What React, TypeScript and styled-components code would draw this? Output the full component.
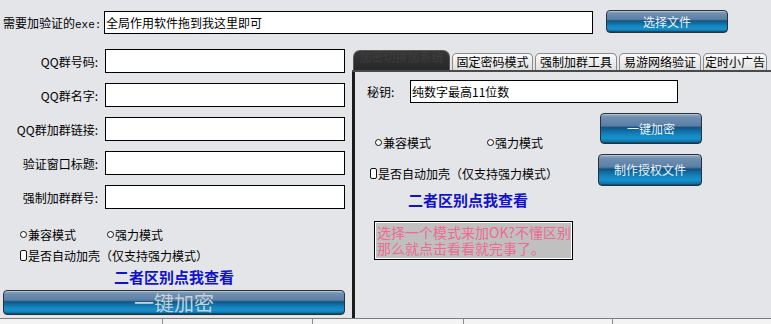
import React from "react";
import styled, { createGlobalStyle } from "styled-components";

const GlobalStyle = createGlobalStyle`
  html, body { margin: 0; padding: 0; background: #e4e5e8; }
  body { font-family: "Noto Sans CJK SC", "Noto Sans", sans-serif; font-size: 12px; color: #000; }
  * { box-sizing: border-box; }
`;

const Window = styled.div`
  width: 771px;
  height: 324px;
  overflow: hidden;
  background: #e4e5e8;
  display: flex;
  flex-direction: column;
`;

const TopBar = styled.div`
  height: 45px;
  flex: none;
  display: flex;
  align-items: flex-start;
  padding: 10px 0 0 3px;
`;

const TopLabel = styled.div`
  width: 101px;
  height: 25px;
  line-height: 25px;
  white-space: nowrap;
`;

const Mono = styled.span`
  font-family: "Liberation Mono", "DejaVu Sans Mono", monospace;
  font-size: 11px;
`;

const TextBox = styled.input<{ $w: number; $h: number }>`
  width: ${(p) => p.$w}px;
  height: ${(p) => p.$h}px;
  border: 1px solid #000;
  background: #fff;
  padding: 0 1px;
  margin: 0;
  font-family: "Noto Sans CJK SC", "Noto Sans", sans-serif;
  font-size: 12px;
  color: #000;
  outline: none;
  border-radius: 0;
`;

const TopInput = styled(TextBox)`
  margin-top: 1px;
`;

const BlueButton = styled.button<{ $w: number; $h: number; $fs?: number; $fg?: string }>`
  width: ${(p) => p.$w}px;
  height: ${(p) => p.$h}px;
  padding: 0;
  margin: 0;
  border: 1px solid #2b3137;
  border-radius: 4px;
  font-family: "Noto Sans CJK SC", "Noto Sans", sans-serif;
  font-size: ${(p) => p.$fs ?? 12}px;
  color: ${(p) => p.$fg ?? "#e8f3fb"};
  line-height: 1;
  background: linear-gradient(
    to bottom,
    #93adc7 0%,
    #6f8fb1 12%,
    #5b7fa5 40%,
    #14527f 47%,
    #0f6599 54%,
    #1586c0 72%,
    #1690cb 84%,
    #0b679c 100%
  );
  box-shadow: inset 0 1px 0 rgba(255, 255, 255, 0.3), inset 0 -1px 0 rgba(0, 0, 0, 0.25);
  cursor: pointer;
`;

const TopButton = styled(BlueButton)`
  margin-left: 13px;
`;

const Main = styled.div`
  flex: 1;
  display: flex;
  min-height: 0;
`;

const LeftPanel = styled.div`
  width: 352px;
  flex: none;
  display: flex;
  flex-direction: column;
`;

const FieldGrid = styled.div`
  display: grid;
  grid-template-columns: 98px 240px;
  column-gap: 7px;
  row-gap: 10px;
  grid-auto-rows: 24px;
  padding-top: 4px;
  align-items: center;
`;

const FieldLabel = styled.div`
  text-align: right;
  white-space: nowrap;
`;

const OptionRow = styled.div<{ $mt: number; $pl: number; $cols?: string }>`
  margin-top: ${(p) => p.$mt}px;
  padding-left: ${(p) => p.$pl}px;
  height: 20px;
  display: grid;
  grid-template-columns: ${(p) => p.$cols ?? "auto"};
  justify-content: start;
  align-items: center;
  white-space: nowrap;
`;

const Option = styled.span`
  display: inline-flex;
  align-items: center;
`;

const RadioMark = styled.span`
  width: 7px;
  height: 7px;
  border: 1px solid #111;
  border-radius: 50%;
  margin-right: 1px;
  background: #fff;
`;

const CheckMark = styled.span`
  width: 7px;
  height: 11px;
  border: 1px solid #111;
  border-radius: 2px;
  margin-right: 1px;
  background: #fff;
`;

const HelpLink = styled.a<{ $mt: number; $ml: number }>`
  display: block;
  margin-top: ${(p) => p.$mt}px;
  margin-left: ${(p) => p.$ml}px;
  height: 20px;
  line-height: 20px;
  font-size: 15px;
  font-weight: bold;
  color: #1212c9;
  text-decoration: none;
  white-space: nowrap;
  cursor: pointer;
`;

const BigButton = styled(BlueButton)`
  margin: 3px 0 0 3px;
`;

const TabControl = styled.div`
  flex: 1;
  min-width: 0;
  display: flex;
  flex-direction: column;
`;

const TabBar = styled.div`
  height: 27px;
  padding: 5px 0 0 1px;
  display: flex;
  align-items: flex-start;
  gap: 2px;
  overflow: hidden;
`;

const Tab = styled.div<{ $w: number; $active?: boolean }>`
  flex: none;
  width: ${(p) => p.$w}px;
  height: ${(p) => (p.$active ? 22 : 18)}px;
  margin-top: ${(p) => (p.$active ? 0 : 3)}px;
  border: 1px solid ${(p) => (p.$active ? "#5a5a5a" : "#8a8a8a")};
  border-bottom: none;
  border-radius: ${(p) => (p.$active ? "7px 7px 0 0" : "5px 5px 0 0")};
  background: ${(p) =>
    p.$active
      ? "linear-gradient(to bottom, #363636, #262626)"
      : "linear-gradient(to bottom, #fbfbfb, #e9e9e9 60%, #dcdcdc)"};
  color: ${(p) => (p.$active ? "#3e3e3e" : "#000")};
  font-size: 12px;
  line-height: ${(p) => (p.$active ? 12 : 16)}px;
  text-align: center;
  white-space: nowrap;
  overflow: hidden;
`;

const TabStrip = styled.div`
  height: 2px;
  flex: none;
  margin-top: -2px;
  background: #4a4a4a;
`;

const TabBody = styled.div`
  flex: 1;
  border-left: 3px solid #1c1c1c;
  padding: 8px 0 0 12px;
  display: flex;
  flex-direction: column;
`;

const KeyRow = styled.div`
  display: flex;
  align-items: center;
  height: 23px;
`;

const KeyLabel = styled.div`
  width: 43px;
  white-space: nowrap;
`;

const BodyColumns = styled.div`
  display: flex;
`;

const OptionsCol = styled.div`
  width: 231px;
  flex: none;
  display: flex;
  flex-direction: column;
`;

const ButtonsCol = styled.div`
  display: flex;
  flex-direction: column;
  align-items: flex-start;
`;

const ColButton = styled(BlueButton)<{ $ml: number }>`
  margin: 10px 0 0 ${(p) => p.$ml}px;
`;

const NoteBox = styled.div`
  margin: 11px 0 0 7px;
  width: 199px;
  height: 39px;
  border: 1px solid #000;
  box-shadow: inset 0 0 0 1px #fff;
  background: #c0c0c0;
  color: #ee6a93;
  font-size: 14px;
  line-height: 16px;
  padding: 2px 2px 0 2px;
  white-space: nowrap;
  overflow: hidden;
`;

const StatusBar = styled.div`
  height: 6px;
  flex: none;
  border-top: 1px solid #7c7c7c;
  background: #f3f3f3;
  display: flex;
`;

const StatusCell = styled.div<{ $w: number }>`
  width: ${(p) => p.$w}px;
  flex: none;
  & + & {
    border-left: 1px solid #8c8c8c;
  }
`;

const fields = ["QQ群号码:", "QQ群名字:", "QQ群加群链接:", "验证窗口标题:", "强制加群群号:"];

const tabs = [
  { label: "加密切换加系统", w: 97, active: true },
  { label: "固定密码模式", w: 81 },
  { label: "强制加群工具", w: 82 },
  { label: "易游网络验证", w: 82 },
  { label: "定时小广告", w: 64 },
];

export default function App() {
  return (
    <>
      <GlobalStyle />
      <Window>
        <TopBar>
          <TopLabel>
            需要加验证的<Mono>exe:</Mono>
          </TopLabel>
          <TopInput $w={489} $h={23} readOnly defaultValue="全局作用软件拖到我这里即可" />
          <TopButton $w={122} $h={23}>选择文件</TopButton>
        </TopBar>
        <Main>
          <LeftPanel>
            <FieldGrid>
              {fields.map((f) => (
                <React.Fragment key={f}>
                  <FieldLabel>{f}</FieldLabel>
                  <TextBox $w={240} $h={24} readOnly defaultValue="" />
                </React.Fragment>
              ))}
            </FieldGrid>
            <OptionRow $mt={15} $pl={20} $cols="87px auto">
              <Option>
                <RadioMark />
                兼容模式
              </Option>
              <Option>
                <RadioMark />
                强力模式
              </Option>
            </OptionRow>
            <OptionRow $mt={1} $pl={20}>
              <Option>
                <CheckMark />
                是否自动加壳（仅支持强力模式）
              </Option>
            </OptionRow>
            <HelpLink $mt={2} $ml={114}>二者区别点我查看</HelpLink>
            <BigButton $w={342} $h={25} $fs={20} $fg="#c3d1da">
              一键加密
            </BigButton>
          </LeftPanel>
          <TabControl>
            <TabBar>
              {tabs.map((t) => (
                <Tab key={t.label} $w={t.w} $active={t.active}>
                  {t.label}
                </Tab>
              ))}
            </TabBar>
            <TabStrip />
            <TabBody>
              <KeyRow>
                <KeyLabel>秘钥:</KeyLabel>
                <TextBox $w={268} $h={23} readOnly defaultValue="纯数字最高11位数" />
              </KeyRow>
              <BodyColumns>
                <OptionsCol>
                  <OptionRow $mt={29} $pl={8} $cols="112px auto">
                    <Option>
                      <RadioMark />
                      兼容模式
                    </Option>
                    <Option>
                      <RadioMark />
                      强力模式
                    </Option>
                  </OptionRow>
                  <OptionRow $mt={11} $pl={3}>
                    <Option>
                      <CheckMark />
                      是否自动加壳（仅支持强力模式）
                    </Option>
                  </OptionRow>
                  <HelpLink $mt={7} $ml={41}>二者区别点我查看</HelpLink>
                  <NoteBox>
                    选择一个模式来加OK?不懂区别
                    <br />
                    那么就点击看看就完事了。
                  </NoteBox>
                </OptionsCol>
                <ButtonsCol>
                  <ColButton $ml={2} $w={102} $h={31}>一键加密</ColButton>
                  <ColButton $ml={0} $w={104} $h={32}>制作授权文件</ColButton>
                </ButtonsCol>
              </BodyColumns>
            </TabBody>
          </TabControl>
        </Main>
        <StatusBar>
          <StatusCell $w={162} />
          <StatusCell $w={150} />
          <StatusCell $w={151} />
          <StatusCell $w={149} />
          <StatusCell $w={159} />
        </StatusBar>
      </Window>
    </>
  );
}
